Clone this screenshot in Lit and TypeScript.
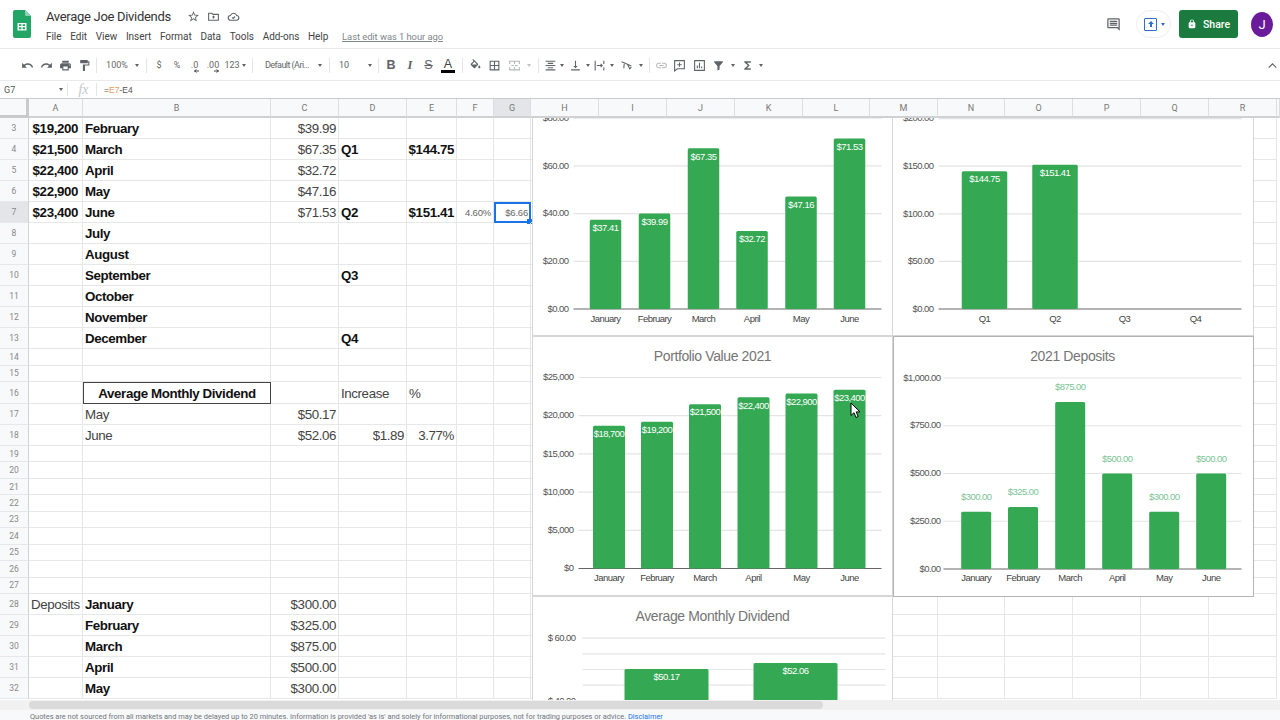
import { LitElement, css, html, svg, nothing } from 'lit';
import { customElement, property } from 'lit/decorators.js';

type Bar = { c: number; v?: number; label?: string; cat: string };
type ChartConfig = {
  box: [number, number, number, number];
  title?: string;
  titleX?: number;
  titleY?: number;
  plot: [number, number];
  zero: number;
  unit: number;
  ticks: [number, string][];
  tickX: number;
  barW: number;
  catY: number;
  above?: boolean;
  strong?: boolean;
  bars: Bar[];
};

const MONTHS = ['January', 'February', 'March', 'April', 'May', 'June'];

const monthBars = (centers: number[], values: number[], labels: string[]): Bar[] =>
  centers.map((c, i) => ({ c, v: values[i], label: labels[i], cat: MONTHS[i] }));

const CHARTS: ChartConfig[] = [
  {
    box: [532, 90, 360, 245],
    plot: [573, 881],
    zero: 308.5,
    unit: 2.385,
    ticks: [[0, '$0.00'], [20, '$20.00'], [40, '$40.00'], [60, '$60.00'], [80, '$80.00']],
    tickX: 568,
    barW: 31.5,
    catY: 317.5,
    bars: monthBars(
      [605, 654, 703, 751.5, 800.5, 849],
      [37.41, 39.99, 67.35, 32.72, 47.16, 71.53],
      ['$37.41', '$39.99', '$67.35', '$32.72', '$47.16', '$71.53'],
    ),
  },
  {
    box: [892, 90, 361, 245],
    plot: [938, 1241],
    zero: 308.5,
    unit: 0.952,
    ticks: [[0, '$0.00'], [50, '$50.00'], [100, '$100.00'], [150, '$150.00'], [200, '$200.00']],
    tickX: 933,
    barW: 45.5,
    catY: 317.5,
    bars: [
      { c: 984, v: 144.75, label: '$144.75', cat: 'Q1' },
      { c: 1054.5, v: 151.41, label: '$151.41', cat: 'Q2' },
      { c: 1124, cat: 'Q3' },
      { c: 1195, cat: 'Q4' },
    ],
  },
  {
    box: [532, 336, 360, 259],
    title: 'Portfolio Value 2021',
    titleX: 712,
    titleY: 355,
    plot: [578, 881],
    zero: 568,
    unit: 38.2 / 5000,
    ticks: [[0, '$0'], [5000, '$5,000'], [10000, '$10,000'], [15000, '$15,000'], [20000, '$20,000'], [25000, '$25,000']],
    tickX: 573,
    barW: 32,
    catY: 576.5,
    bars: monthBars(
      [608.5, 656.5, 704.5, 753, 801, 849],
      [18700, 19200, 21500, 22400, 22900, 23400],
      ['$18,700', '$19,200', '$21,500', '$22,400', '$22,900', '$23,400'],
    ),
  },
  {
    box: [893, 336, 360, 260],
    title: '2021 Deposits',
    titleX: 1072,
    titleY: 355,
    plot: [943, 1241],
    zero: 568.5,
    unit: 0.191,
    ticks: [[0, '$0.00'], [250, '$250.00'], [500, '$500.00'], [750, '$750.00'], [1000, '$1,000.00']],
    tickX: 940,
    barW: 30,
    catY: 576.5,
    above: true,
    strong: true,
    bars: monthBars(
      [975.7, 1022.5, 1069.7, 1116.7, 1163.7, 1210.7],
      [300, 325, 875, 500, 300, 500],
      ['$300.00', '$325.00', '$875.00', '$500.00', '$300.00', '$500.00'],
    ),
  },
  {
    box: [532, 596, 360, 150],
    title: 'Average Monthly Dividend',
    titleX: 712,
    titleY: 615,
    plot: [582, 885],
    zero: 825.5,
    unit: 3.13,
    ticks: [[40, '$ 40.00'], [45, ''], [50, ''], [55, ''], [60, '$ 60.00']],
    tickX: 575,
    barW: 84,
    catY: 840,
    bars: [
      { c: 666, v: 50.17, label: '$50.17', cat: '' },
      { c: 795, v: 52.06, label: '$52.06', cat: '' },
    ],
  },
];

@customElement('sheet-chart')
export class SheetChart extends LitElement {
  static styles = css`
    :host {
      position: absolute;
      display: block;
    }
    svg {
      display: block;
      font-family: 'Liberation Sans', Arial, sans-serif;
    }
    .frame {
      fill: #fff;
      stroke: #d6d6d6;
    }
    .frame.strong {
      stroke: #b4b4b4;
    }
    .grid {
      stroke: #e4e4e4;
      stroke-width: 1.2;
    }
    .axis {
      stroke: #666;
      stroke-width: 1;
    }
    .bar {
      fill: #34a853;
    }
    .title {
      font-size: 14px;
      letter-spacing: -0.38px;
      fill: #757575;
      text-anchor: middle;
    }
    .tick,
    .cat,
    .val {
      font-size: 9.5px;
      letter-spacing: -0.55px;
      dominant-baseline: central;
    }
    .tick {
      fill: #555;
      text-anchor: end;
    }
    .cat {
      fill: #444;
      text-anchor: middle;
    }
    .val {
      fill: #fff;
      text-anchor: middle;
    }
    .val.above {
      fill: #7cc496;
    }
  `;

  @property({ attribute: false })
  config!: ChartConfig;

  render() {
    const c = this.config;
    const [x, y, w, h] = c.box;
    return html`
      <svg width=${w + 1} height=${h + 1} viewBox="${x - 0.5} ${y - 0.5} ${w + 1} ${h + 1}">
        <rect class="frame ${c.strong ? 'strong' : ''}" x=${x} y=${y} width=${w} height=${h}></rect>
        ${c.title
          ? svg`<text class="title" x=${c.titleX} y=${(c.titleY ?? 0) + 5}>${c.title}</text>`
          : nothing}
        ${c.ticks.map(([v, label]) => {
          const ty = c.zero - v * c.unit;
          return svg`
            ${v > c.ticks[0][0] || c.ticks[0][0] !== 0
              ? svg`<line class="grid" x1=${c.plot[0]} x2=${c.plot[1]} y1=${ty} y2=${ty}></line>`
              : nothing}
            <text class="tick" x=${c.tickX} y=${ty - 0.8}>${label}</text>
          `;
        })}
        <line class="axis" x1=${c.plot[0]} x2=${c.plot[1]} y1=${c.zero} y2=${c.zero}></line>
        ${c.bars.map((b) => {
          const top = c.zero - (b.v ?? 0) * c.unit;
          return svg`
            ${b.v !== undefined
              ? svg`<rect class="bar" x=${b.c - c.barW / 2} y=${top} width=${c.barW} height=${c.zero - top} rx="1.5"></rect>
                  <text class="val ${c.above ? 'above' : ''}" x=${b.c} y=${c.above ? top - 15.3 : top + 7.7}>${b.label}</text>`
              : nothing}
            <text class="cat" x=${b.c} y=${c.catY}>${b.cat}</text>
          `;
        })}
      </svg>
    `;
  }
}

const COLS = 'ABCDEFGHIJKLMNOPQR'.split('');
type Cell = [string, string?];
type Row = { n: number; h: number; cells: Partial<Record<string, Cell>> };

const row = (n: number, h: number, cells: Row['cells'] = {}): Row => ({ n, h, cells });
const B = 'b';
const BR = 'b r';
const BA = 'b r inset';
const R = 'r';

const ROWS: Row[] = [
  row(3, 21, { A: ['$19,200', BA], B: ['February', B], C: ['$39.99', R] }),
  row(4, 21, { A: ['$21,500', BA], B: ['March', B], C: ['$67.35', R], D: ['Q1', B], E: ['$144.75', BR] }),
  row(5, 21, { A: ['$22,400', BA], B: ['April', B], C: ['$32.72', R] }),
  row(6, 21, { A: ['$22,900', BA], B: ['May', B], C: ['$47.16', R] }),
  row(7, 21, {
    A: ['$23,400', BA],
    B: ['June', B],
    C: ['$71.53', R],
    D: ['Q2', B],
    E: ['$151.41', BR],
    F: ['4.60%', 'r tiny'],
    G: ['$6.66', 'r tiny sel'],
  }),
  row(8, 21, { B: ['July', B] }),
  row(9, 21, { B: ['August', B] }),
  row(10, 21, { B: ['September', B], D: ['Q3', B] }),
  row(11, 21, { B: ['October', B] }),
  row(12, 21, { B: ['November', B] }),
  row(13, 21, { B: ['December', B], D: ['Q4', B] }),
  row(14, 16.5),
  row(15, 16.5),
  row(16, 22, { B: ['Average Monthly Dividend', 'b boxed'], D: ['Increase'], E: ['%'] }),
  row(17, 21, { B: ['May'], C: ['$50.17', R] }),
  row(18, 21, { B: ['June'], C: ['$52.06', R], D: ['$1.89', R], E: ['3.77%', R] }),
  row(19, 16.45),
  row(20, 16.45),
  row(21, 16.45),
  row(22, 16.45),
  row(23, 16.45),
  row(24, 16.45),
  row(25, 16.45),
  row(26, 16.45),
  row(27, 16.45),
  row(28, 21, { A: ['Deposits'], B: ['January', B], C: ['$300.00', R] }),
  row(29, 21, { B: ['February', B], C: ['$325.00', R] }),
  row(30, 21, { B: ['March', B], C: ['$875.00', R] }),
  row(31, 21, { B: ['April', B], C: ['$500.00', R] }),
  row(32, 21, { B: ['May', B], C: ['$300.00', R] }),
];

const ic = (d: string, size = 13) =>
  html`<svg class="ic" width=${size} height=${size} viewBox="0 0 24 24"><path d=${d}></path></svg>`;

const strokeIc = (d: string, size = 13, extra = '') =>
  html`<svg class="ic line ${extra}" width=${size} height=${size} viewBox="0 0 24 24"><path d=${d}></path></svg>`;

const P = {
  undo: 'M12.5 8c-2.65 0-5.05.99-6.9 2.6L2 7v9h9l-3.62-3.62c1.39-1.16 3.16-1.88 5.12-1.88 3.54 0 6.55 2.31 7.6 5.5l2.37-.78C21.08 11.03 17.15 8 12.5 8z',
  redo: 'M18.4 10.6C16.55 8.99 14.15 8 11.5 8c-4.65 0-8.58 3.03-9.96 7.22L3.9 16c1.05-3.19 4.05-5.5 7.6-5.5 1.95 0 3.73.72 5.12 1.88L13 16h9V7l-3.6 3.6z',
  print: 'M19 8H5c-1.66 0-3 1.34-3 3v6h4v4h12v-4h4v-6c0-1.66-1.34-3-3-3zm-3 11H8v-5h8v5zm3-7c-.55 0-1-.45-1-1s.45-1 1-1 1 .45 1 1-.45 1-1 1zm-1-9H6v4h12V3z',
  paint: 'M18 4V3c0-.55-.45-1-1-1H5c-.55 0-1 .45-1 1v4c0 .55.45 1 1 1h12c.55 0 1-.45 1-1V6h1v4H9v11c0 .55.45 1 1 1h2c.55 0 1-.45 1-1v-9h8V4h-3z',
  star: 'M22 9.24l-7.19-.62L12 2 9.19 8.63 2 9.24l5.46 4.73L5.82 21 12 17.27 18.18 21l-1.63-7.03L22 9.24zM12 15.4l-3.76 2.27 1-4.28-3.32-2.88 4.38-.38L12 6.1l1.71 4.04 4.38.38-3.32 2.88 1 4.28L12 15.4z',
  fill: 'M16.56 8.94L7.62 0 6.21 1.41l2.38 2.38-5.15 5.15c-.59.59-.59 1.54 0 2.12l5.5 5.5c.29.29.68.44 1.06.44s.77-.15 1.06-.44l5.5-5.5c.59-.58.59-1.53 0-2.12zM5.21 10L10 5.21 14.79 10H5.21zM19 11.5s-2 2.17-2 3.5c0 1.1.9 2 2 2s2-.9 2-2c0-1.33-2-3.5-2-3.5z',
  borders: 'M3 3v18h18V3H3zm8 16H5v-6h6v6zm0-8H5V5h6v6zm8 8h-6v-6h6v6zm0-8h-6V5h6v6z',
  merge: 'M3 9V4h18v5M3 15v5h18v-5M12 4v5M12 15v5M6 12h5M13 12h5',
  align: 'M3 3v2h18V3H3zm4 4v2h10V7H7zm-4 4v2h18v-2H3zm4 4v2h10v-2H7zm-4 4v2h18v-2H3z',
  valign: 'M16 13h-3V3h-2v10H8l4 4 4-4zM4 19v2h16v-2H4z',
  wrap: 'M4 3v18M20 3v6M20 15v6M7 12h10M14 9l3 3-3 3',
  rotate: 'M3 5l18 8M8 7l-1 10M14 10l4 8 3-3',
  link: 'M3.9 12c0-1.71 1.39-3.1 3.1-3.1h4V7H7c-2.76 0-5 2.24-5 5s2.24 5 5 5h4v-1.9H7c-1.71 0-3.1-1.39-3.1-3.1zM8 13h8v-2H8v2zm9-6h-4v1.9h4c1.71 0 3.1 1.39 3.1 3.1s-1.39 3.1-3.1 3.1h-4V17h4c2.76 0 5-2.24 5-5s-2.24-5-5-5z',
  addComment: 'M3 3h18v15H8l-5 4zM12 6.500v8M8 10.500h8',
  chart: 'M3 3h18v18H3zM8 17v-5M12 17V7M16 17v-3',
  filter: 'M4 4h16v2.200l-6 6.800v6.500l-4 1.500v-8L4 6.200z',
  sigma: 'M18 4H6v2l6.500 6L6 18v2h12v-3h-7l5-5-5-5h7V4z',
  folder: 'M3 6h6l2 2h10v11H3zM12 10.500v5M9.500 13h5',
  cloud: 'M7 19a4.500 4.500 0 0 1-.5-9 6 6 0 0 1 11.300 0A4.500 4.500 0 0 1 17 19zM9.500 13.500l2 2 3.500-3.500',
  comments: 'M21.990 4c0-1.100-.89-2-1.990-2H4c-1.100 0-2 .9-2 2v12c0 1.100.9 2 2 2h14l4 4-.01-18zM20 4v13.170L18.830 16H4V4h16zM6 12h12v2H6zm0-3h12v2H6zm0-3h12v2H6z',
  lock: 'M18 8h-1V6c0-2.760-2.240-5-5-5S7 3.240 7 6v2H6c-1.100 0-2 .9-2 2v10c0 1.100.9 2 2 2h12c1.100 0 2-.9 2-2V10c0-1.100-.9-2-2-2zm-6 9c-1.100 0-2-.9-2-2s.9-2 2-2 2 .9 2 2-.9 2-2 2zm3.100-9H8.900V6c0-1.710 1.390-3.100 3.100-3.100s3.100 1.390 3.100 3.100v2z',
};

const slot = (w: number, content: unknown = nothing) =>
  html`<span class="slot" style="width:${w}px">${content}</span>`;
const sep = (w: number) => slot(w, html`<i class="sep"></i>`);
const caret = (w = 10) => slot(w, html`<i class="caret"></i>`);
const label = (w: number, text: string, cls = '') =>
  slot(w, html`<span class="tb-text ${cls}">${text}</span>`);
// decimal buttons carry a tiny arrow below the digits
const decimal = (w: number, text: string, flip: boolean) =>
  slot(
    w,
    html`<span class="tb-text dec">
      ${text}
      <svg class="dec-arrow ${flip ? 'flip' : ''}" width="7" height="4" viewBox="0 0 7 4">
        <path d="M0 2h5M2.500 .4L.8 2l1.700 1.600"></path>
      </svg>
    </span>`,
  );

const TOOLBAR = [
  slot(19, ic(P.undo)),
  slot(19, ic(P.redo)),
  slot(19, ic(P.print)),
  slot(19, ic(P.paint)),
  sep(4),
  slot(9),
  label(20, '100%'),
  slot(5),
  caret(),
  sep(8),
  label(18, '$'),
  label(18, '%'),
  decimal(17, '.0', false),
  decimal(20, '.00', true),
  label(18, '123'),
  caret(6),
  sep(10),
  slot(7),
  label(46, 'Default (Ari...', 'tight'),
  slot(5),
  caret(),
  sep(8),
  slot(6),
  label(10, '10'),
  slot(16),
  caret(),
  sep(6),
  slot(20, html`<b class="fmt">B</b>`),
  slot(18, html`<em class="fmt serif">I</em>`),
  slot(19, html`<s class="fmt">S</s>`),
  slot(20, html`<span class="fmt color-a">A</span>`),
  sep(8),
  slot(18, ic(P.fill)),
  slot(20, ic(P.borders)),
  slot(20, strokeIc(P.merge, 13, 'faint')),
  slot(10, html`<i class="caret faint"></i>`),
  sep(8),
  slot(16, ic(P.align)),
  caret(8),
  slot(18, ic(P.valign)),
  caret(8),
  slot(15, strokeIc(P.wrap)),
  caret(),
  slot(19, strokeIc(P.rotate)),
  caret(9),
  sep(8),
  slot(16, html`<svg class="ic faint" width="13" height="13" viewBox="0 0 24 24"><path d=${P.link}></path></svg>`),
  slot(21, strokeIc(P.addComment)),
  slot(18, strokeIc(P.chart)),
  slot(20, ic(P.filter)),
  caret(),
  slot(19, ic(P.sigma)),
  caret(8),
];

const MENU = ['File', 'Edit', 'View', 'Insert', 'Format', 'Data', 'Tools', 'Add-ons', 'Help'];

@customElement('app-root')
export class AppRoot extends LitElement {
  static styles = css`
    :host {
      display: block;
      width: 1280px;
      height: 720px;
      overflow: hidden;
      background: #fff;
      font-family: Roboto, 'Liberation Sans', Arial, sans-serif;
      color: #3c4043;
    }
    .page {
      display: flex;
      flex-direction: column;
      height: 720px;
    }
    .ic {
      display: block;
      fill: #5f6368;
    }
    .ic.line {
      fill: none;
      stroke: #5f6368;
      stroke-width: 2;
    }
    .ic.faint {
      opacity: 0.45;
    }

    /* title bar */
    .top {
      display: flex;
      align-items: flex-start;
      height: 49px;
      box-sizing: border-box;
      border-bottom: 1px solid #e8eaed;
      padding: 10px 7px 0 13px;
      flex: none;
    }
    .logo {
      flex: none;
      display: block;
    }
    .doc {
      margin-left: 15px;
      margin-top: -1px;
    }
    .doc-title {
      display: flex;
      align-items: center;
      height: 14px;
      font-size: 13px;
      letter-spacing: -0.3px;
      color: #333;
    }
    .doc-icons {
      display: flex;
      gap: 7px;
      margin-left: 16px;
    }
    .menu {
      display: flex;
      align-items: center;
      gap: 8.75px;
      margin-top: 5px;
      height: 16px;
      font-size: 10px;
      letter-spacing: -0.05px;
      color: #444;
    }
    .last-edit {
      margin-left: 5px;
      color: #80868b;
      text-decoration: underline;
      font-size: 9.4px;
    }
    .actions {
      margin-left: auto;
      display: flex;
      align-items: center;
      height: 28px;
    }
    .present {
      display: flex;
      align-items: center;
      justify-content: flex-start;
      gap: 4px;
      box-sizing: border-box;
      width: 35px;
      height: 28px;
      margin-left: 15px;
      padding-left: 7px;
      border: 1px solid #eceef0;
      border-radius: 14px;
    }
    .present-box {
      width: 13px;
      height: 13px;
      box-sizing: border-box;
      border: 1.5px solid #2f6fc4;
      border-radius: 1px;
      display: flex;
      align-items: center;
      justify-content: center;
    }
    .present-box svg {
      fill: #2f6fc4;
    }
    .present .caret {
      border-top-color: #2f6fc4;
    }
    .share {
      display: flex;
      align-items: center;
      justify-content: center;
      gap: 6px;
      width: 59px;
      height: 28px;
      margin-left: 8px;
      background: #1b7a3d;
      border-radius: 3px;
      color: #fff;
      font-size: 10.5px;
      font-weight: 500;
    }
    .share .ic {
      fill: #fff;
    }
    .avatar {
      width: 22px;
      height: 25px;
      margin-left: 13px;
      border-radius: 50%;
      background: #6a1b9a;
      color: #fff;
      font-size: 13px;
      display: flex;
      align-items: center;
      justify-content: center;
    }

    /* toolbar */
    .toolbar {
      display: flex;
      align-items: center;
      height: 32px;
      box-sizing: border-box;
      border-bottom: 1px solid #e8eaed;
      padding: 1px 0 0 18px;
      flex: none;
    }
    .slot {
      display: flex;
      align-items: center;
      justify-content: center;
      flex: none;
      height: 20px;
    }
    .sep {
      display: block;
      width: 1px;
      height: 15px;
      background: #e3e5e7;
    }
    .caret {
      display: block;
      width: 0;
      height: 0;
      border-left: 2.5px solid transparent;
      border-right: 2.5px solid transparent;
      border-top: 3px solid #5f6368;
    }
    .caret.faint {
      opacity: 0.4;
    }
    .tb-text {
      font-size: 9px;
      color: #666;
      white-space: nowrap;
    }
    .tb-text.tight {
      letter-spacing: -0.55px;
    }
    .dec {
      position: relative;
    }
    .dec-arrow {
      position: absolute;
      left: 50%;
      bottom: -3px;
      margin-left: -1px;
      fill: none;
      stroke: #444;
      stroke-width: 1;
    }
    .dec-arrow.flip {
      transform: scaleX(-1);
    }
    .fmt {
      font-family: 'Liberation Sans', Arial, sans-serif;
      font-size: 12.5px;
      color: #5f6368;
      text-decoration-thickness: 1px;
      font-style: normal;
    }
    .fmt.serif {
      font-family: 'Liberation Serif', serif;
      font-style: italic;
      font-weight: 700;
    }
    .color-a {
      color: #444;
      border-bottom: 3px solid #000;
      line-height: 12px;
      padding: 0 3px;
    }
    .collapse {
      margin-left: auto;
      margin-right: 1px;
    }

    /* formula bar */
    .formula {
      display: flex;
      align-items: center;
      height: 17px;
      box-sizing: border-box;
      flex: none;
      font-size: 9px;
      color: #555;
    }
    .name-box {
      width: 63px;
      padding-left: 4px;
      box-sizing: border-box;
      display: flex;
      justify-content: space-between;
      align-items: center;
    }
    .formula .sep {
      height: 13px;
    }
    .fx {
      width: 25px;
      text-align: center;
      font-family: 'Liberation Serif', serif;
      font-style: italic;
      font-size: 14px;
      color: #c4c7c9;
    }
    .expr {
      margin-left: 7px;
      font-family: 'Liberation Sans', Arial, sans-serif;
      font-size: 8.5px;
    }
    .expr span {
      color: #e59a5c;
    }

    /* sheet */
    .head,
    .row {
      display: grid;
      grid-template-columns: 29px 54px 188px 68px 68px 50px 37px 37px 68px 68px 68px 68px 67px 68px 67px 68px 68px 68px 68px 3px;
    }
    .head {
      height: 20px;
      flex: none;
      box-sizing: border-box;
      border-top: 1px solid #c8cacc;
      background: #f8f9fa;
      font-size: 9px;
      color: #777;
    }
    .head > span {
      display: flex;
      align-items: center;
      justify-content: center;
      border-right: 1px solid #dcdee0;
      border-bottom: 2px solid #cfd1d3;
    }
    .head > .corner {
      border-right: 3px solid #c8cacc;
      border-bottom: 3px solid #c8cacc;
      box-sizing: border-box;
    }
    .head > .on {
      background: #e3e5e8;
    }
    .body {
      position: relative;
      flex: 1;
      overflow: hidden;
      min-height: 0;
    }
    .row {
      font-family: 'Liberation Sans', Arial, sans-serif;
      font-size: 13.33px;
      letter-spacing: -0.4px;
      color: #434343;
    }
    .cell {
      position: relative;
      display: flex;
      align-items: center;
      box-sizing: border-box;
      padding: 1px 2px 0;
      white-space: nowrap;
      border-right: 1px solid #e6e7e8;
      border-bottom: 1px solid #e6e7e8;
      min-width: 0;
    }
    .num {
      justify-content: center;
      background: #f8f9fa;
      font-family: Roboto, sans-serif;
      font-size: 8.5px;
      letter-spacing: 0;
      color: #888;
      padding: 0;
      border-right-color: #d0d2d4;
    }
    .num.on {
      background: #e3e5e8;
    }
    .b {
      font-weight: 700;
      color: #111;
    }
    .r {
      justify-content: flex-end;
      padding-right: 2px;
    }
    .r.inset {
      padding-right: 4px;
    }
    .tiny {
      font-size: 9.5px;
      letter-spacing: -0.2px;
      color: #666;
    }
    .boxed {
      justify-content: center;
      border: 1.5px solid #444;
    }
    .sel {
      outline: 2px solid #1a73e8;
      outline-offset: -2px;
    }
    .sel::after {
      content: '';
      position: absolute;
      right: -2px;
      bottom: -2px;
      width: 5px;
      height: 5px;
      background: #1a73e8;
    }
    .cursor {
      position: absolute;
      left: 850px;
      top: 284px;
    }

    /* bottom */
    .scroll {
      flex: none;
      height: 10px;
      background: #f1f1f1;
      display: flex;
      align-items: center;
      padding-left: 29px;
    }
    .thumb {
      width: 794px;
      height: 8px;
      background: #dadada;
      border-radius: 4px;
    }
    .foot {
      flex: none;
      height: 10px;
      overflow: hidden;
      background: #f8f9fa;
      padding: 2px 0 0 30px;
      box-sizing: border-box;
      font-size: 7.4px;
      line-height: 10px;
      color: #70757a;
      white-space: nowrap;
    }
    .foot a {
      color: #1a73e8;
    }
  `;

  private renderRow(r: Row) {
    return html`
      <div class="row" style="height:${r.h}px">
        <span class="cell num ${r.n === 7 ? 'on' : ''}">${r.n}</span>
        ${COLS.map((c) => {
          const cell = r.cells[c];
          return html`<span class="cell ${cell?.[1] ?? ''}">${cell?.[0] ?? ''}</span>`;
        })}
        <span></span>
      </div>
    `;
  }

  render() {
    return html`
      <div class="page">
        <header class="top">
          <svg class="logo" width="18" height="28" viewBox="0 0 18 28">
            <path d="M2 0h10l6 6v20a2 2 0 0 1-2 2H2a2 2 0 0 1-2-2V2a2 2 0 0 1 2-2z" fill="#23a566"></path>
            <path d="M12 0l6 6h-4.500A1.500 1.500 0 0 1 12 4.500z" fill="#8ed1b1"></path>
            <path d="M4.500 13h9v7.500h-9z M6 14.300v1.800h2.400v-1.800z M9.600 14.300v1.800H12v-1.800z M6 17.300v1.900h2.400v-1.900z M9.600 17.300v1.900H12v-1.900z" fill="#fff" fill-rule="evenodd"></path>
          </svg>
          <div class="doc">
            <div class="doc-title">
              Average Joe Dividends
              <span class="doc-icons">
                ${ic(P.star)}
                ${strokeIc(P.folder)}
                ${strokeIc(P.cloud)}
              </span>
            </div>
            <nav class="menu">
              ${MENU.map((m) => html`<span>${m}</span>`)}
              <span class="last-edit">Last edit was 1 hour ago</span>
            </nav>
          </div>
          <div class="actions">
            ${ic(P.comments, 15)}
            <div class="present">
              <span class="present-box">
                <svg width="8" height="8" viewBox="0 0 8 8"><path d="M4 1l3 3H5v3H3V4H1z"></path></svg>
              </span>
              <i class="caret"></i>
            </div>
            <div class="share">${ic(P.lock, 10)}Share</div>
            <div class="avatar">J</div>
          </div>
        </header>

        <div class="toolbar">
          ${TOOLBAR}
          <span class="slot collapse">
            <svg class="ic line" width="13" height="13" viewBox="0 0 24 24"><path d="M5 16l7-7 7 7"></path></svg>
          </span>
        </div>

        <div class="formula">
          <div class="name-box">G7 <i class="caret"></i></div>
          <span class="slot" style="width:8px"><i class="sep"></i></span>
          <span class="fx">fx</span>
          <i class="sep"></i>
          <span class="expr">=<span>E7</span>-E4</span>
        </div>

        <div class="head">
          <span class="corner"></span>
          ${COLS.map((c) => html`<span class=${c === 'G' ? 'on' : ''}>${c}</span>`)}
          <span></span>
        </div>

        <div class="body">
          ${ROWS.map((r) => this.renderRow(r))}
          ${CHARTS.map(
            (c) => html`<sheet-chart
              .config=${c}
              style="left:${c.box[0] - 0.5}px;top:${c.box[1] - 118.5}px"
            ></sheet-chart>`,
          )}
          <svg class="cursor" width="12" height="17" viewBox="0 0 12 17">
            <path d="M1 1v12.500l3-2.800 2 4.800 2.200-1-2-4.600H10z" fill="#fff" stroke="#000" stroke-width="1"></path>
          </svg>
        </div>

        <div class="scroll"><div class="thumb"></div></div>
        <div class="foot">
          Quotes are not sourced from all markets and may be delayed up to 20 minutes. Information is provided 'as is' and
          solely for informational purposes, not for trading purposes or advice. <a>Disclaimer</a>
        </div>
      </div>
    `;
  }
}
